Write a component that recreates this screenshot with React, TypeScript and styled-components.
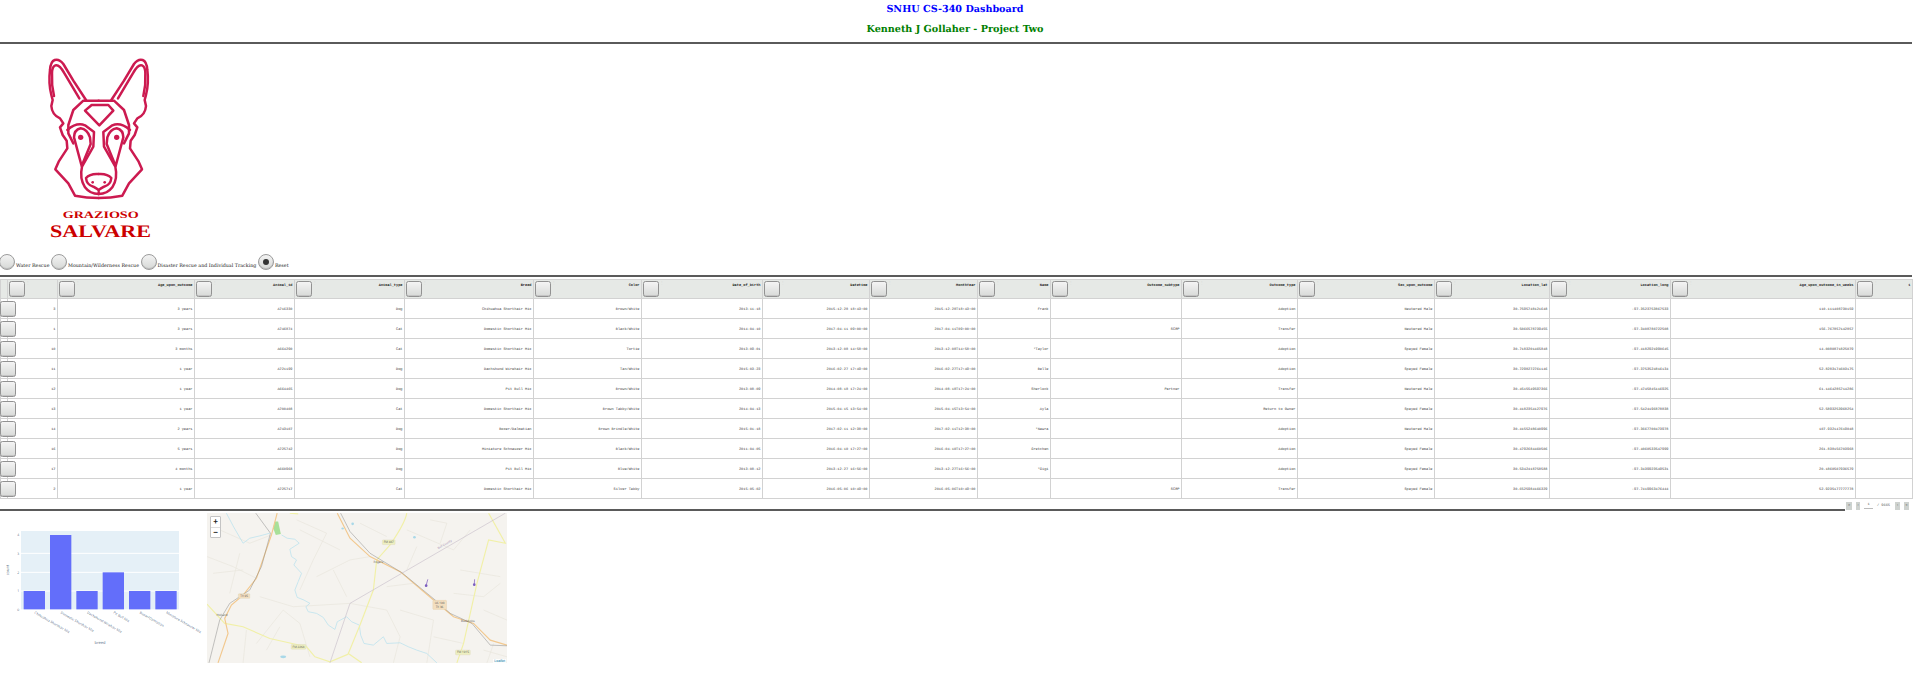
import React from "react";
import styled, { createGlobalStyle } from "styled-components";

const Global = createGlobalStyle`
  html, body { margin: 0; padding: 0; background: #fff; overflow: hidden; }
  #root { width: 1915px; height: 675px; overflow: hidden; }
`;
const Page = styled.div`
  width: 1915px;
  font-family: "DejaVu Serif", serif;
  text-rendering: geometricPrecision;
`;
const Header = styled.header`
  height: 42px;
  display: flex;
  flex-direction: column;
  align-items: center;
  padding: 4px 5px 0 0;
  box-sizing: border-box;
  gap: 8px;
`;
const Title = styled.div<{ $c: string }>`
  color: ${(p) => p.$c};
  font-size: 9.65px;
  line-height: 12px;
  font-weight: 700;
`;
const Rule = styled.div`
  height: 2px;
  background: #5a5a5a;
  margin-right: 3px;
`;
const LogoBox = styled.div`
  height: 210px;
  padding: 6px 0 0 40px;
  box-sizing: border-box;
`;
const RadioRow = styled.div`
  display: flex;
  align-items: flex-end;
  height: 16px;
  margin-bottom: 5px;
  margin-left: -1px;
`;
const RadioLabel = styled.label`
  display: flex;
  align-items: flex-end;
  font-size: 4.8px;
  line-height: 6px;
  color: #222;
  margin-right: 1.5px;
`;
const RadioText = styled.span`
  margin-left: 1px;
  white-space: nowrap;
`;
const Radio = styled.input`
  appearance: none;
  position: relative;
  width: 16px;
  height: 16px;
  margin: 0;
  border-radius: 50%;
  border: 1px solid #9b9b9b;
  box-sizing: border-box;
  background: linear-gradient(#f3f3f3, #d6d8d6);
  box-shadow: inset 0 -1px 0 #bdbdbd;
  &:checked::after {
    content: "";
    position: absolute;
    left: 4px;
    top: 4px;
    width: 6px;
    height: 6px;
    border-radius: 50%;
    background: #333;
  }
`;
const TableWrap = styled.div`
  margin-top: 2px;
  width: 1912px;
`;
const Table = styled.table`
  width: 1912px;
  table-layout: fixed;
  border-collapse: collapse;
  font-family: "Liberation Mono", monospace;
  font-size: 3.6px;
  color: #3c3c3c;
`;
const Col = styled.col<{ $w: number }>`
  width: ${(p) => p.$w}px;
`;
const Th = styled.th`
  position: relative;
  height: 19px;
  padding: 4px 1.5px 0 0;
  box-sizing: border-box;
  background: #e6e9e6;
  border: 1px solid #d2d2d2;
  text-align: right;
  vertical-align: top;
  font-weight: 700;
  color: #222;
  white-space: nowrap;
`;
const Td = styled.td`
  position: relative;
  height: 20px;
  padding: 2px 1.5px 0 0;
  box-sizing: border-box;
  border: 1px solid #d2d2d2;
  text-align: right;
  vertical-align: middle;
  white-space: nowrap;
  overflow: visible;
`;
const Check = styled.input`
  appearance: none;
  width: 16px;
  height: 16px;
  margin: 0;
  box-sizing: border-box;
  border: 1px solid #929292;
  border-radius: 2.5px;
  background: linear-gradient(#f4f4f4, #d8dad8);
  box-shadow: inset 0 -1px 0 #c4c4c4;
  position: absolute;
`;
const HeadCheck = styled(Check)`
  left: 1px;
  top: 1px;
`;
const RowCheck = styled(Check)`
  left: -1px;
  top: 2px;
  z-index: 1;
`;
const SortMark = styled.span`
  position: absolute;
  left: 18px;
  top: 1px;
  color: #c4c4c4;
  font-weight: 400;
`;
const Footer = styled.div`
  width: 1912px;
  height: 13px;
  display: flex;
  align-items: flex-end;
`;
const FooterRule = styled.div`
  flex: 1;
  height: 2px;
  background: #5a5a5a;
  margin-bottom: 1px;
`;
const Pager = styled.div`
  width: 67px;
  height: 9px;
  margin: 0 0 2px 0;
  padding-left: 1px;
  box-sizing: border-box;
  display: flex;
  align-items: center;
  font-family: "Liberation Mono", monospace;
  font-size: 3.6px;
  color: #555;
`;
const PageBtn = styled.span<{ $w: number; $ml: number }>`
  width: ${(p) => p.$w}px;
  margin-left: ${(p) => p.$ml}px;
  height: 8px;
  background: #ced2cf;
  display: flex;
  align-items: center;
  justify-content: center;
`;
const PageNum = styled.span`
  width: 9px;
  margin-left: 4px;
  text-align: center;
  border-bottom: 1px solid #bbb;
  line-height: 6px;
`;
const PageTotal = styled.span`
  width: 15px;
  margin: 0 3px 0 4px;
  white-space: nowrap;
`;
const Bottom = styled.div`
  display: flex;
  margin-top: 1px;
`;
const MapBox = styled.div`
  position: relative;
  width: 300px;
  height: 150px;
  background: #f5f3ef;
  overflow: hidden;
`;
const Zoom = styled.div`
  position: absolute;
  left: 3px;
  top: 3px;
  width: 11px;
  border: 1px solid #c4c4c4;
  border-radius: 1px;
  background: #fff;
  box-sizing: border-box;
  font-family: "Liberation Sans", sans-serif;
`;
const ZoomBtn = styled.div`
  height: 9.5px;
  line-height: 9.5px;
  text-align: center;
  font-size: 8px;
  font-weight: 700;
  color: #222;
  & + & { border-top: 1px solid #ddd; }
`;
const Attribution = styled.div`
  position: absolute;
  right: 1px;
  bottom: 0;
  padding: 0 1px;
  background: rgba(255,255,255,.8);
  font-family: "Liberation Sans", sans-serif;
  font-size: 3.6px;
  line-height: 4.5px;
  color: #0078a8;
`;

const widths = [7,50,137,100,110,129,108,121,107,108,73,131,116,137,115,121,185,57];
const heads = ["","Age_upon_outcome","Animal_id","Animal_type","Breed","Color","Date_of_birth","Datetime","MonthYear","Name","Outcome_subtype","Outcome_type","Sex_upon_outcome","Location_lat","Location_long","Age_upon_outcome_in_weeks","1"];
const rows = [
["3","3 years","A716330","Dog","Chihuahua Shorthair Mix","Brown/White","2013-11-18","2015-12-28 18:43:00","2015-12-28T18:43:00","Frank","","Adoption","Neutered Male","30.7595748121648","-97.3523753867533","110.111408730159",""],
["1","3 years","A746874","Cat","Domestic Shorthair Mix","Black/White","2014-04-10","2017-04-11 09:00:00","2017-04-11T09:00:00","","SCRP","Transfer","Neutered Male","30.5066578739455","-97.3408780722508","156.767857142857",""],
["10","3 months","A664290","Cat","Domestic Shorthair Mix","Tortie","2013-09-01","2013-12-08 14:58:00","2013-12-08T14:58:00","*Taylor","","Adoption","Spayed Female","30.7183201465848","-97.4182921990645","14.0080871825079",""],
["11","1 year","A721199","Dog","Dachshund Wirehair Mix","Tan/White","2015-03-23","2016-02-27 17:49:00","2016-02-27T17:49:00","Belle","","Adoption","Spayed Female","30.7298272761146","-97.3753524816134","52.8283174603175",""],
["12","1 year","A664465","Dog","Pit Bull Mix","Brown/White","2013-08-09","2014-08-18 17:24:00","2014-08-18T17:24:00","Sherlock","Partner","Transfer","Neutered Male","30.4515549597366","-97.4745845116925","61.1464285714286",""],
["13","1 year","A700408","Cat","Domestic Shorthair Mix","Brown Tabby/White","2014-04-13","2015-04-15 13:54:00","2015-04-15T13:54:00","Ayla","","Return to Owner","Spayed Female","30.4182354127976","-97.5424196878838","52.5893253968254",""],
["14","2 years","A743107","Dog","Boxer/Dalmatian","Brown Brindle/White","2015-01-18","2017-02-11 12:38:00","2017-02-11T12:38:00","*Nawra","","Adoption","Neutered Male","30.4155248640996","-97.3667700473978","107.932147619048",""],
["16","5 years","A725742","Dog","Miniature Schnauzer Mix","Black/White","2011-04-05","2016-04-10 17:27:00","2016-04-10T17:27:00","Gretchen","","Adoption","Spayed Female","30.4792684460506","-97.4060533547999","261.838156703968",""],
["17","4 months","A660968","Dog","Pit Bull Mix","Blue/White","2013-08-12","2013-12-27 16:56:00","2013-12-27T16:56:00","*Gigi","","Adoption","Spayed Female","30.5342418758588","-97.3439923549531","20.1860507936579",""],
["2","1 year","A725717","Cat","Domestic Shorthair Mix","Silver Tabby","2015-05-02","2016-05-06 10:49:00","2016-05-06T10:49:00","","SCRP","Transfer","Spayed Female","30.6525984166329","-97.7419963476444","52.9235177777778",""]
];

const DogSide = () => (
  <>
    <path d="M138,150 L100,92 L70,42 Q58,26 44,30 Q32,34 30,60 Q25,100 34,135 L38,150 L34,168 Q36,195 60,205 L70,220 L60,232 L68,255 L80,272 L82,295 L56,335 L46,358 L85,400 L105,437 Q140,444 176,444" />
    <path d="M118,145 L72,68 Q58,42 46,46 Q36,50 36,70 Q34,105 42,138" />
    <path d="M176,152 L130,152 L100,180 L85,225 L85,250 L100,280" />
    <path d="M82,240 Q110,216 135,226 L162,246 L160,290 L126,350 Q118,385 135,412 Q150,432 176,432" />
    <path d="M122,235 Q102,240 102,262 L125,348 L152,282 L150,262 Q142,238 122,235 Z" />
    <path d="M176,372 Q150,370 138,384 Q140,405 160,410 Q170,416 176,420" />
    <circle cx="122" cy="262" r="8" fill="#cc1a50" stroke="none" />
    <circle cx="158" cy="397" r="4" fill="#cc1a50" stroke="none" />
  </>
);

const Logo = () => (
  <svg width="120" height="200" viewBox="0 0 360 600">
    <g fill="none" stroke="#cc1a50" strokeWidth="7.5" strokeLinejoin="round" strokeLinecap="round">
      <DogSide />
      <g transform="matrix(-1 0 0 1 352 0)"><DogSide /></g>
      <path d="M135,182 L155,165 L205,165 L220,182 L178,226 Z" />
      <path d="M176,432 L176,426" />
    </g>
    <text x="68" y="503" fontFamily="'Liberation Serif', serif" fontSize="30" fontWeight="700" fill="#cc0000" textLength="228" lengthAdjust="spacingAndGlyphs">GRAZIOSO</text>
    <text x="30" y="560" fontFamily="'Liberation Serif', serif" fontWeight="700" fontSize="53" fill="#cc0000" textLength="303" lengthAdjust="spacingAndGlyphs">SALVARE</text>
  </svg>
);

const bars: [number, number][] = [[71,243],[150,75],[229,243],[308,187],[387,243],[466,243]];
const breeds = ["Chihuahua Shorthair Mix","Domestic Shorthair Mix","Dachshund Wirehair Mix","Pit Bull Mix","Boxer/Dalmatian","Miniature Schnauzer Mix"];
const Chart = () => (
  <svg width="207" height="150" viewBox="0 9 621 450">
    <rect x="63" y="63" width="474" height="235" fill="#e5f0f7" />
    {[130,187,243].map((y) => <line key={y} x1="63" x2="537" y1={y} y2={y} stroke="#fff" strokeWidth="3" />)}
    {bars.map(([x,y]) => <rect key={x} x={x} y={y} width="64" height={298-y} fill="#636efa" />)}
    <g fontFamily="'Open Sans', sans-serif" fontSize="10.4" fill="#2a3f5f" fillOpacity="0.8">
      {["0","1","2","3","4"].map((t,i) => <text key={t} x="58" y={302-i*55.7} textAnchor="end">{t}</text>)}
      {breeds.map((b,i) => <text key={b} x={102+i*79} y="310" transform={`rotate(30 ${102+i*79} 310)`}>{b}</text>)}
      <text x="300" y="402" textAnchor="middle" fontSize="12">breed</text>
      <text x="27" y="180" textAnchor="middle" fontSize="12" transform="rotate(-90 27 180)">count</text>
    </g>
  </svg>
);

const minor = [
"M22,140 L100,170 L170,205","M60,60 L150,100 L215,75","M290,30 L380,70 L340,150 L300,240","M300,60 L420,120","M350,200 L450,150 L510,140","M120,130 L90,250","M40,190 L130,180","M180,260 L280,290 L450,280",
"M140,360 L130,458","M170,400 L250,300 L300,340","M400,180 L440,260","M450,280 L560,300 L600,380 L580,458","M600,300 L700,330 L680,458","M620,60 L760,120 L810,60","M690,30 L740,40 L720,100","M780,180 L900,200","M760,250 L850,260 L900,220","M850,300 L920,330",
"M700,380 L790,400","M560,230 L640,220","M480,40 L560,80","M330,440 L300,340","M200,420 L240,350","M880,400 L860,458","M850,420 L920,440","M650,110 L620,180"
];
const Shield = ({ x, y, w, t, c }: { x: number; y: number; w: number; t: string; c: string }) => (
  <>
    <rect x={x-w/2} y={y-7} width={w} height={14} rx="2" fill={c} stroke="#d8d2b0" />
    <text x={x} y={y+3} textAnchor="middle">{t}</text>
  </>
);
const MapArt = () => (
  <svg width="300" height="150" viewBox="22 10 898 448">
    <rect x="22" y="10" width="898" height="448" fill="#f5f3ef" />
    <g fill="none" stroke="#e8e5dd" strokeWidth="2">{minor.map((d) => <path key={d} d={d} />)}</g>
    <path d="M225,35 L235,35 L243,72 L228,75 L220,55 Z" fill="#a8e098" />
    <g fill="#a9d8e8"><ellipse cx="458" cy="42" rx="4" ry="4" /><ellipse cx="643" cy="82" rx="4" ry="4" /><ellipse cx="428" cy="56" rx="4" ry="3" /><ellipse cx="250" cy="440" rx="9" ry="4" /></g>
    <g fill="none" stroke="#bfe3ee" strokeWidth="2.5">
      <path d="M80,10 Q100,50 130,100 L150,85 L180,78 L210,70" />
      <path d="M245,75 L262,85 L285,88 L298,100 L270,118 L275,140 L290,150 L282,165 L305,190 L295,215 L285,240 L292,262 L312,270 L330,280 L318,290 L325,305 L350,310 L370,322 L385,345 L405,358 L412,335 L440,320 L455,335 L478,345 L482,375 L492,400 L520,405 L550,380 L560,400 L600,398 L625,410 L650,420 L680,430 L710,458" />
    </g>
    <g fill="none" stroke="#f1f0a8" strokeWidth="3.5">
      <path d="M620,10 Q615,40 570,105 L530,150 L520,240 L480,345 L445,430 L485,458" />
      <path d="M22,282 L75,340 L130,350 L210,385 L320,410 L345,440 L390,455 L445,432" />
      <path d="M865,10 L915,100 L865,90 L830,220 L790,400 L770,458" />
      <path d="M270,10 L295,12" />
    </g>
    <path d="M915,10 L605,190 L450,280 L390,458" fill="none" stroke="#cbc2cc" strokeWidth="2" />
    <g fill="none" stroke="#f2c88e" strokeWidth="3.5">
      <path d="M232,10 L215,75 L170,205 L130,255 L95,285 L75,325 L85,370 L55,458" />
      <path d="M412,10 L450,85 L510,140 L600,185 L700,270 L760,320 L820,340 L870,390 L920,405" />
    </g>
    <g fill="none" stroke="#8a8a8a" strokeWidth="1.5">
      <path d="M168,10 L212,70 L185,170 L150,240 L90,280 L60,330 L28,458" />
      <path d="M422,10 L450,65 L510,130 L605,188 L705,270 L750,310 L815,340 L870,405 L920,407" />
    </g>
    <g fill="none" stroke="#8f71c4" strokeWidth="2.5">
      <path d="M683,208 L678,226" /><path d="M823,208 L822,224" />
    </g>
    <circle cx="678" cy="227" r="4" fill="#7c5fc0" /><circle cx="822" cy="224" r="4" fill="#7c5fc0" />
    <g fontFamily="'Open Sans', sans-serif" fontSize="9" fill="#555">
      <Shield x={566} y={97} w={38} t="FM 487" c="#eef0c0" />
      <Shield x={133} y={258} w={34} t="TX 95" c="#f3dfc0" />
      <Shield x={296} y={410} w={44} t="FM 2268" c="#eef0c0" />
      <Shield x={788} y={427} w={44} t="FM 1915" c="#eef0c0" />
      <rect x="698" y="271" width="41" height="27" rx="2" fill="#f3dfc0" stroke="#e0c8a0" />
      <text x="718" y="282" textAnchor="middle">US 190</text>
      <text x="718" y="293" textAnchor="middle">TX 36</text>
      <text x="535" y="158" textAnchor="middle">Rogers</text>
      <text x="67" y="317" textAnchor="middle">Holland</text>
      <text x="803" y="336" textAnchor="middle">Buckholts</text>
      <text x="735" y="106" textAnchor="middle" fill="#a08ab0" transform="rotate(-30 735 106)">Bell County</text>
    </g>
  </svg>
);

export default function App() {
  return (
    <Page>
      <Global />
      <Header>
        <Title $c="#0000ff">SNHU CS-340 Dashboard</Title>
        <Title $c="#008000">Kenneth J Gollaher - Project Two</Title>
      </Header>
      <Rule />
      <LogoBox><Logo /></LogoBox>
      <RadioRow>
        {["Water Rescue","Mountain/Wilderness Rescue","Disaster Rescue and Individual Tracking","Reset"].map((t) => (
          <RadioLabel key={t}>
            <Radio type="radio" name="filter" defaultChecked={t === "Reset"} />
            <RadioText>{t}</RadioText>
          </RadioLabel>
        ))}
      </RadioRow>
      <Rule />
      <TableWrap>
        <Table>
          <colgroup>{widths.map((w, i) => <Col key={i} $w={w} />)}</colgroup>
          <thead>
            <tr>
              <Th />
              {heads.map((h, i) => (
                <Th key={i}>
                  <HeadCheck type="checkbox" />
                  <SortMark>⋮</SortMark>
                  {h}
                </Th>
              ))}
            </tr>
          </thead>
          <tbody>
            {rows.map((r, i) => (
              <tr key={i}>
                <Td><RowCheck type="checkbox" /></Td>
                {r.map((c, j) => <Td key={j}>{c}</Td>)}
              </tr>
            ))}
          </tbody>
        </Table>
      </TableWrap>
      <Footer>
        <FooterRule />
        <Pager>
          <PageBtn $w={6} $ml={0}>«</PageBtn>
          <PageBtn $w={4} $ml={4}>‹</PageBtn>
          <PageNum>1</PageNum>
          <PageTotal>/ 9665</PageTotal>
          <PageBtn $w={5} $ml={0}>›</PageBtn>
          <PageBtn $w={5} $ml={4}>»</PageBtn>
        </Pager>
      </Footer>
      <Bottom>
        <Chart />
        <MapBox>
          <MapArt />
          <Zoom><ZoomBtn>+</ZoomBtn><ZoomBtn>−</ZoomBtn></Zoom>
          <Attribution>Leaflet</Attribution>
        </MapBox>
      </Bottom>
    </Page>
  );
}
